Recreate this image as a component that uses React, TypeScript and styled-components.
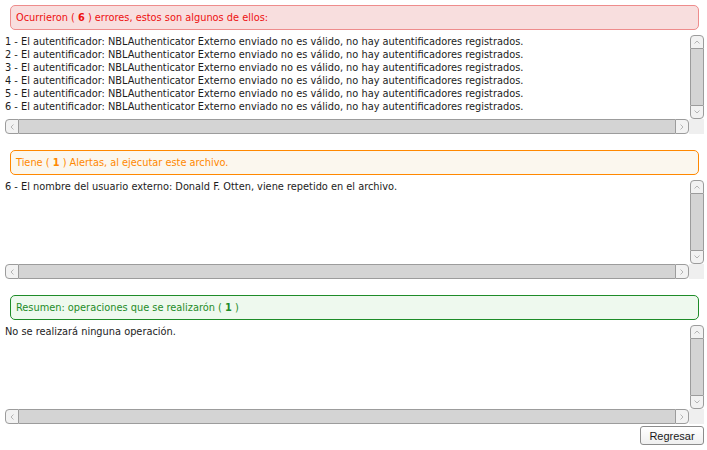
import React from "react";
import styled, { createGlobalStyle } from "styled-components";

const GlobalStyle = createGlobalStyle`
  html, body {
    margin: 0;
    padding: 0;
    background: #ffffff;
  }
  body {
    font-family: "DejaVu Sans Condensed", "DejaVu Sans", sans-serif;
    font-stretch: condensed;
    font-size: 10.9px;
    color: #1c1c1c;
  }
`;

const tones = {
  error: { bg: "#f8dede", border: "#ee8c8c", text: "#ee1111" },
  warning: { bg: "#fbf7ee", border: "#ff8800", text: "#ff8800" },
  success: { bg: "#eef9ee", border: "#1e8c28", text: "#1e8c28" },
};

type Tone = keyof typeof tones;

const Page = styled.div`
  width: 699px;
  padding: 5px 0 0 5px;
  display: flex;
  flex-direction: column;
`;

const Section = styled.section`
  display: flex;
  flex-direction: column;
  gap: 4px;
  & + & {
    margin-top: 16px;
  }
`;

const Notice = styled.div<{ $tone: Tone }>`
  margin: 0 5px;
  height: 25px;
  box-sizing: border-box;
  display: flex;
  align-items: center;
  padding: 0 5px 1px;
  border: 1px solid ${(p) => tones[p.$tone].border};
  border-radius: 5px;
  background: ${(p) => tones[p.$tone].bg};
  color: ${(p) => tones[p.$tone].text};
  white-space: pre;

  b {
    font-weight: bold;
  }
`;

const ScrollFrame = styled.div`
  display: grid;
  grid-template-columns: 684px 15px;
  grid-template-rows: 85px 15px;
`;

const Content = styled.div`
  overflow: hidden;
  line-height: 13px;
  padding: 1px 0 0;
`;

const Line = styled.div`
  white-space: nowrap;
`;

const VBar = styled.div`
  display: flex;
  flex-direction: column;
  padding: 1px 0 0 1px;
`;

const HBar = styled.div`
  display: flex;
`;

const Corner = styled.div`
  background: #efefef;
`;

const Track = styled.div<{ $vertical?: boolean }>`
  flex: 1;
  background: #d4d4d4;
  border: 1px solid #9c9c9c;
  ${(p) => (p.$vertical ? "border-top: none; border-bottom: none;" : "border-left: none; border-right: none;")}
`;

const ArrowButton = styled.div<{ $side: "top" | "bottom" | "left" | "right" }>`
  width: ${(p) => (p.$side === "top" || p.$side === "bottom" ? "auto" : "14px")};
  height: ${(p) => (p.$side === "top" || p.$side === "bottom" ? "14px" : "auto")};
  box-sizing: border-box;
  border: 1px solid #9c9c9c;
  background: #f2f2f2;
  display: flex;
  align-items: center;
  justify-content: center;
  border-radius: ${(p) =>
    p.$side === "top"
      ? "4px 4px 0 0"
      : p.$side === "bottom"
      ? "0 0 4px 4px"
      : p.$side === "left"
      ? "4px 0 0 4px"
      : "0 4px 4px 0"};
`;

const Footer = styled.div`
  display: flex;
  justify-content: flex-end;
  padding-top: 2px;
`;

const BackButton = styled.button`
  width: 64px;
  height: 19px;
  padding: 0;
  border: 1px solid #8c8c8c;
  border-radius: 3px;
  background: linear-gradient(#ffffff, #efefef);
  font-family: "Liberation Sans", Arial, sans-serif;
  font-size: 11px;
  color: #1a1a1a;
`;

const rotations = { top: 0, right: 90, bottom: 180, left: 270 };

function Chevron({ side }: { side: "top" | "bottom" | "left" | "right" }) {
  return (
    <svg width="8" height="8" viewBox="0 0 8 8" style={{ transform: `rotate(${rotations[side]}deg)` }}>
      <polyline points="1.5,5.5 4,3 6.5,5.5" fill="none" stroke="#b4b4b4" strokeWidth="1" />
    </svg>
  );
}

function Scroller({ lines }: { lines: string[] }) {
  return (
    <ScrollFrame>
      <Content>
        {lines.map((l, i) => (
          <Line key={i}>{l}</Line>
        ))}
      </Content>
      <VBar>
        <ArrowButton $side="top">
          <Chevron side="top" />
        </ArrowButton>
        <Track $vertical />
        <ArrowButton $side="bottom">
          <Chevron side="bottom" />
        </ArrowButton>
      </VBar>
      <HBar>
        <ArrowButton $side="left">
          <Chevron side="left" />
        </ArrowButton>
        <Track />
        <ArrowButton $side="right">
          <Chevron side="right" />
        </ArrowButton>
      </HBar>
      <Corner />
    </ScrollFrame>
  );
}

const errors = [1, 2, 3, 4, 5, 6].map(
  (n) =>
    `${n} - El autentificador: NBLAuthenticator Externo enviado no es válido, no hay autentificadores registrados.`
);

export default function App() {
  return (
    <>
      <GlobalStyle />
      <Page>
        <Section>
          <Notice $tone="error">
            Ocurrieron ( <b>6</b> ) errores, estos son algunos de ellos:
          </Notice>
          <Scroller lines={errors} />
        </Section>
        <Section>
          <Notice $tone="warning">
            Tiene ( <b>1</b> ) Alertas, al ejecutar este archivo.
          </Notice>
          <Scroller lines={["6 - El nombre del usuario externo: Donald F. Otten, viene repetido en el archivo."]} />
        </Section>
        <Section>
          <Notice $tone="success">
            Resumen: operaciones que se realizarón ( <b>1</b> )
          </Notice>
          <Scroller lines={["No se realizará ninguna operación."]} />
        </Section>
        <Footer>
          <BackButton>Regresar</BackButton>
        </Footer>
      </Page>
    </>
  );
}
